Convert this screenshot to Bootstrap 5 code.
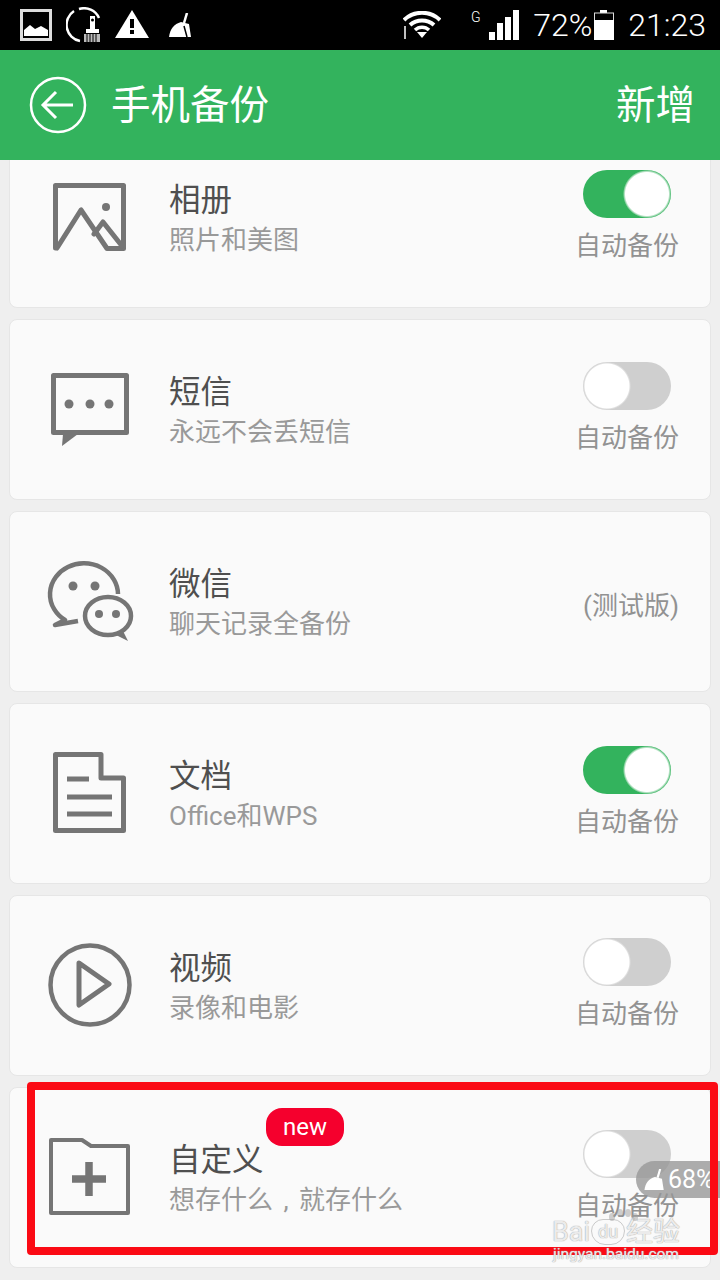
<!DOCTYPE html>
<html lang="zh">
<head>
    <meta charset="UTF-8">
    <meta name="viewport" content="width=device-width, initial-scale=1.0">
    <title>手机备份</title>
    <link href="https://cdn.jsdelivr.net/npm/bootstrap@5.3.2/dist/css/bootstrap.min.css" rel="stylesheet">
    <style>
        body {
            background-color: #efefef;
            font-family: Roboto, "Noto Sans CJK SC", sans-serif;
            width: 720px;
            height: 1280px;
            overflow: hidden;
            position: relative;
        }
        .status-bar {
            height: 50px;
            background-color: #000;
            color: #fff;
            font-size: 32px;
            font-weight: 300;
            line-height: 50px;
            padding: 0 14px 0 20px;
        }
        .st-brush { margin-left: 14px; }
        .st-warn { margin-left: 13px; margin-top: -2px; }
        .st-broom { margin-left: 20px; }
        .st-signal { margin-left: 30px; }
        .st-percent { margin-left: 14px; }
        .st-battery { margin-left: 2px; }
        .st-time { margin-left: 14px; }
        .app-bar {
            height: 110px;
            background-color: #33b35d;
            color: #fff;
            font-size: 39.5px;
            padding: 0 25px 0 29px;
            position: relative;
            z-index: 2;
        }
        .app-bar span {
            padding-top: 2px;
        }
        .scroll-area {
            height: 1120px;
            overflow: hidden;
            padding: 0 9px;
        }
        .backup-list {
            margin-top: -33px;
            gap: 11px;
        }
        .backup-card {
            height: 181px;
            background-color: #fafafa;
            border: 1px solid #e6e6e6;
            border-radius: 8px;
            flex-shrink: 0;
            position: relative;
        }
        .icon-cell {
            width: 160px;
            height: 178px;
            flex-shrink: 0;
        }
        .icon-cell svg {
            width: 90px;
            height: 90px;
            color: #757575;
        }
        .text-cell {
            margin-left: -1px;
            padding-top: 53px;
            line-height: 40px;
        }
        .item-title {
            font-size: 31.5px;
            color: #4f4f4f;
        }
        .item-sub {
            font-size: 26px;
            color: #999;
            margin-top: -1px;
        }
        .sub-comma {
            display: inline-block;
            width: 26px;
            text-align: center;
        }
        .auto-cell {
            width: 104px;
            margin-right: 31px;
            padding-top: 42px;
            flex-shrink: 0;
        }
        .auto-label {
            font-size: 26px;
            color: #929292;
            line-height: 40px;
            margin-top: 8px;
            white-space: nowrap;
        }
        .beta-label {
            font-size: 26px;
            color: #929292;
            line-height: 40px;
            margin-top: 32px;
            white-space: nowrap;
            text-align: right;
        }
        .form-switch.backup-switch {
            padding: 0;
            margin: 0;
            min-height: 0;
            height: 48px;
        }
        .form-switch.backup-switch .form-check-input {
            width: 88px;
            height: 48px;
            margin: 0;
            float: none;
            display: block;
            border: 0;
            border-radius: 24px;
            background-color: #cfcfcf;
            background-image: radial-gradient(circle 24px at 24px 24px, #fff 22px, #dedede 23px, transparent 24px);
            background-position: 0 0;
            background-size: auto;
        }
        .form-switch.backup-switch .form-check-input:checked {
            background-color: #33b35d;
            background-image: radial-gradient(circle 24px at 64px 24px, #fff 21.5px, #8fd3a5 23px, transparent 24px);
        }
        .new-tag {
            position: absolute;
            left: 256px;
            top: 20px;
            width: 78px;
            height: 38px;
            padding: 0;
            line-height: 38px;
            border-radius: 16px;
            background-color: #f5002d;
            color: #fff;
            font-size: 24px;
            font-weight: 400;
        }
        .mark-box {
            position: absolute;
            left: 27px;
            top: 1082px;
            width: 691px;
            height: 173px;
            border: 8px solid #fb0a14;
            border-radius: 4px;
            z-index: 4;
        }
        .clean-pill {
            position: absolute;
            left: 636px;
            top: 1161px;
            width: 84px;
            height: 37px;
            border-radius: 19px 0 0 19px;
            background-color: rgba(150, 150, 150, .78);
            color: #fff;
            font-size: 25px;
            padding-left: 8px;
            gap: 3px;
            z-index: 3;
        }
        .water-mark {
            position: absolute;
            left: 552px;
            top: 1217px;
            width: 128px;
            color: rgba(255, 255, 255, .8);
            text-shadow: 0 0 1px #a8a8a8, 0 0 1px #a8a8a8;
            z-index: 5;
        }
        .water-top {
            font-size: 27px;
            line-height: 30px;
            white-space: nowrap;
        }
        .water-du {
            font-size: 18px;
            line-height: 24px;
            width: 34px;
            border: 1px solid rgba(170, 170, 170, .6);
            border-radius: 12px 12px 14px 14px;
            text-align: center;
            margin: 0 1px;
        }
        .water-paw {
            position: absolute;
            left: 56px;
            top: -8px;
        }
        .water-url {
            font-size: 15.5px;
            line-height: 14px;
            white-space: nowrap;
            text-align: center;
        }
    </style>
</head>
<body>

<!-- status bar -->
<div class="status-bar d-flex align-items-center">
    <svg width="32" height="32" viewBox="0 0 32 32"><rect x="1.5" y="1.5" width="29" height="29" fill="none" stroke="#ddd" stroke-width="3"/><path d="M4 27 V21 L10 16 L15 20 L21 17 L28 21 V27 Z" fill="#fff"/></svg>
    <svg class="st-brush" width="36" height="36" viewBox="0 0 36 36"><path d="M14 34 A16.5 16.5 0 0 1 8 4" fill="none" stroke="#fff" stroke-width="2.5"/><path d="M13 2 A16.5 16.5 0 0 1 33 11" fill="none" stroke="#fff" stroke-width="2.5"/><rect x="24" y="9" width="5" height="13" fill="#fff"/><circle cx="26.5" cy="13" r="1.5" fill="#000"/><rect x="20" y="22" width="13" height="4" fill="#fff"/><rect x="18" y="27" width="16" height="8" fill="#bbb"/><path d="M21 27 V35 M24 27 V35 M27 27 V35 M30 27 V35" stroke="#000"/></svg>
    <svg class="st-warn" width="34" height="28" viewBox="0 0 34 28"><path d="M17 0 L34 28 H0 Z" fill="#fff"/><rect x="15" y="9" width="4" height="9" fill="#000"/><rect x="15" y="20" width="4" height="4" fill="#000"/></svg>
    <svg class="st-broom" width="23" height="24" viewBox="0 0 23 24"><path d="M18 0 L15 10" stroke="#fff" stroke-width="2.5"/><path d="M12 9 L20 11 L22 24 H0 C1 16 5 11 12 9 Z" fill="#fff"/><path d="M15 13 L18 24" stroke="#000" stroke-width="1.5"/></svg>
    <svg class="ms-auto" width="38" height="28" viewBox="0 0 38 28"><path d="M1 9 A26 26 0 0 1 37 9" fill="none" stroke="#fff" stroke-width="4"/><path d="M7 14 A18 18 0 0 1 31 14" fill="none" stroke="#fff" stroke-width="4"/><path d="M12 19 A10 10 0 0 1 26 19" fill="none" stroke="#fff" stroke-width="3.5"/><path d="M14 21 h10 l-5 6 Z" fill="#fff"/><path d="M2 15 v13" stroke="#fff" stroke-width="1.5"/></svg>
    <svg class="st-signal" width="48" height="30" viewBox="0 0 48 30"><text x="0" y="12" fill="#fff" font-size="14" font-family="Roboto">G</text><rect x="18" y="22" width="6" height="8" fill="#fff"/><rect x="26" y="13" width="6" height="17" fill="#fff"/><rect x="34" y="7" width="6" height="23" fill="#fff"/><rect x="42" y="0" width="6" height="30" fill="#fff"/></svg>
    <span class="st-percent">72%</span>
    <svg class="st-battery" width="20" height="30" viewBox="0 0 20 30"><rect x="6" y="0" width="7" height="3" fill="#fff"/><rect x="0.5" y="3" width="19" height="26.5" fill="none" stroke="#ddd"/><rect x="0" y="10" width="20" height="20" fill="#fff"/></svg>
    <span class="st-time">21:23</span>
</div>

<!-- app bar -->
<div class="app-bar d-flex align-items-center justify-content-between">
    <div class="d-flex align-items-center gap-4">
        <svg width="58" height="58" viewBox="0 0 58 58" fill="none" stroke="#fff"><circle cx="29" cy="29" r="27" stroke-width="2.5"/><path d="M44 29 H14 M27 16 L14 29 L27 42" stroke-width="3"/></svg>
        <span>手机备份</span>
    </div>
    <span>新增</span>
</div>

<div class="scroll-area">
    <div class="backup-list d-flex flex-column">

        <!-- 相册 -->
        <div class="backup-card d-flex">
            <div class="icon-cell d-flex align-items-center justify-content-center">
                <svg viewBox="0 0 90 90" fill="none" stroke="currentColor" stroke-width="5" stroke-linejoin="round" stroke-linecap="round"><path d="M10.5 76 V13.5 H78.5 V76.5 H62 L36 38 L12 76"/><path d="M49 62 L58 50 L77 74"/><circle cx="61" cy="35" r="4" fill="currentColor" stroke="none"/></svg>
            </div>
            <div class="text-cell flex-grow-1">
                <div class="item-title">相册</div>
                <div class="item-sub">照片和美图</div>
            </div>
            <div class="auto-cell d-flex flex-column align-items-center">
                <div class="form-check form-switch backup-switch"><input class="form-check-input" type="checkbox" role="switch" checked></div>
                <div class="auto-label">自动备份</div>
            </div>
        </div>

        <!-- 短信 -->
        <div class="backup-card d-flex">
            <div class="icon-cell d-flex align-items-center justify-content-center">
                <svg viewBox="0 0 90 90" fill="none" stroke="currentColor" stroke-width="5" stroke-linejoin="round"><rect x="8.5" y="11.5" width="73" height="57"/><path d="M18 70 H33 L17 82 Z" fill="currentColor" stroke="none"/><g fill="currentColor" stroke="none"><circle cx="24" cy="40" r="4.5"/><circle cx="45" cy="40" r="4.5"/><circle cx="64" cy="40" r="4.5"/></g></svg>
            </div>
            <div class="text-cell flex-grow-1">
                <div class="item-title">短信</div>
                <div class="item-sub">永远不会丢短信</div>
            </div>
            <div class="auto-cell d-flex flex-column align-items-center">
                <div class="form-check form-switch backup-switch"><input class="form-check-input" type="checkbox" role="switch"></div>
                <div class="auto-label">自动备份</div>
            </div>
        </div>

        <!-- 微信 -->
        <div class="backup-card d-flex">
            <div class="icon-cell d-flex align-items-center justify-content-center">
                <svg viewBox="0 0 90 90" fill="none" stroke="currentColor" stroke-width="4.5" stroke-linejoin="round"><path d="M73 38 A34 31 0 1 0 20 64 L10 69 L33 65"/><ellipse cx="63" cy="60" rx="23" ry="19"/><path d="M69 78 L83 85 L78 75 Z" fill="currentColor" stroke="none"/><g fill="currentColor" stroke="none"><circle cx="28" cy="30" r="4.5"/><circle cx="50" cy="30" r="4.5"/><circle cx="54" cy="58" r="4"/><circle cx="71" cy="58" r="4"/></g></svg>
            </div>
            <div class="text-cell flex-grow-1">
                <div class="item-title">微信</div>
                <div class="item-sub">聊天记录全备份</div>
            </div>
            <div class="auto-cell">
                <div class="beta-label">(测试版)</div>
            </div>
        </div>

        <!-- 文档 -->
        <div class="backup-card d-flex">
            <div class="icon-cell d-flex align-items-center justify-content-center">
                <svg viewBox="0 0 90 90" fill="none" stroke="currentColor" stroke-width="5" stroke-linejoin="round"><path d="M10.5 6.5 H56 V30 H78.5 V82.5 H10.5 Z"/><path d="M22 31 H44 M22 49 H67 M22 66 H67"/></svg>
            </div>
            <div class="text-cell flex-grow-1">
                <div class="item-title">文档</div>
                <div class="item-sub">Office和WPS</div>
            </div>
            <div class="auto-cell d-flex flex-column align-items-center">
                <div class="form-check form-switch backup-switch"><input class="form-check-input" type="checkbox" role="switch" checked></div>
                <div class="auto-label">自动备份</div>
            </div>
        </div>

        <!-- 视频 -->
        <div class="backup-card d-flex">
            <div class="icon-cell d-flex align-items-center justify-content-center">
                <svg viewBox="0 0 90 90" fill="none" stroke="currentColor" stroke-width="4.5" stroke-linejoin="round"><circle cx="45" cy="45" r="39.5"/><path d="M34 23 L64 44 L34 65 Z" stroke-width="5"/></svg>
            </div>
            <div class="text-cell flex-grow-1">
                <div class="item-title">视频</div>
                <div class="item-sub">录像和电影</div>
            </div>
            <div class="auto-cell d-flex flex-column align-items-center">
                <div class="form-check form-switch backup-switch"><input class="form-check-input" type="checkbox" role="switch"></div>
                <div class="auto-label">自动备份</div>
            </div>
        </div>

        <!-- 自定义 -->
        <div class="backup-card d-flex">
            <div class="icon-cell d-flex align-items-center justify-content-center">
                <svg viewBox="0 0 90 90" fill="none" stroke="currentColor" stroke-width="4" stroke-linejoin="round"><path d="M6 8 H37 L46 14 H83 V81 H6 Z"/><path d="M27 47 H61 M44 30 V64" stroke-width="7.5"/></svg>
            </div>
            <div class="text-cell flex-grow-1">
                <div class="item-title">自定义</div>
                <div class="item-sub">想存什么<span class="sub-comma">,</span>就存什么</div>
            </div>
            <span class="badge new-tag">new</span>
            <div class="auto-cell d-flex flex-column align-items-center">
                <div class="form-check form-switch backup-switch"><input class="form-check-input" type="checkbox" role="switch"></div>
                <div class="auto-label">自动备份</div>
            </div>
        </div>

    </div>
</div>

<!-- overlays: float ball, red mark, watermark -->
<div class="clean-pill d-flex align-items-center">
    <svg width="21" height="21" viewBox="0 0 23 24"><path d="M18 0 L15 10" stroke="#fff" stroke-width="2.5"/><path d="M12 9 L20 11 L22 24 H0 C1 16 5 11 12 9 Z" fill="#fff"/></svg>
    <span>68%</span>
</div>
<div class="mark-box"></div>
<div class="water-mark">
    <svg class="water-paw" width="30" height="12" viewBox="0 0 30 12" fill="rgba(160,160,160,.5)"><ellipse cx="4" cy="8" rx="3" ry="4"/><ellipse cx="12" cy="4" rx="3" ry="4"/><ellipse cx="20" cy="4" rx="3" ry="4"/><ellipse cx="27" cy="8" rx="3" ry="4"/></svg>
    <div class="water-top d-flex align-items-center"><span>Bai</span><span class="water-du">du</span><span>经验</span></div>
    <div class="water-url">jingyan.baidu.com</div>
</div>

<script src="https://cdn.jsdelivr.net/npm/bootstrap@5.3.2/dist/js/bootstrap.bundle.min.js"></script>
</body>
</html>
